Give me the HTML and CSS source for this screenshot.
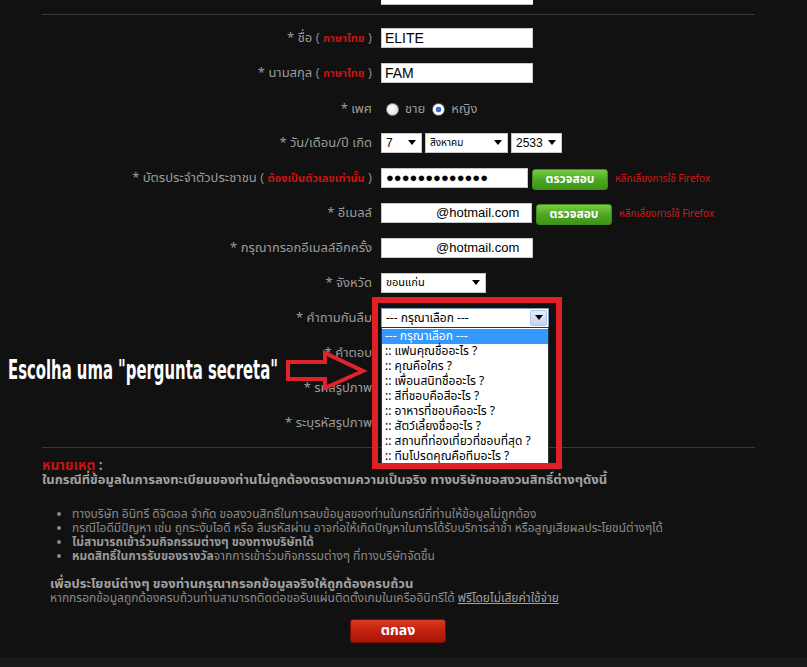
FILE: index.html
```html
<!DOCTYPE html>
<html lang="th">
<head>
<meta charset="utf-8">
<title>สมัครสมาชิก</title>
<link rel="stylesheet" href="styles.css">
</head>
<body>
<div class="page">
  <div class="top-stub"></div>
  <div class="rule rule-top"></div>

  <div class="form">
    <div class="row">
      <div class="label">* ชื่อ <span class="paren">(</span> <span class="hint">ภาษาไทย</span> <span class="paren">)</span></div>
      <div class="field"><div class="input">ELITE</div></div>
    </div>
    <div class="row">
      <div class="label">* นามสกุล <span class="paren">(</span> <span class="hint">ภาษาไทย</span> <span class="paren">)</span></div>
      <div class="field"><div class="input">FAM</div></div>
    </div>
    <div class="row row-gender">
      <div class="label">* เพศ</div>
      <div class="field radios">
        <span class="radio"></span><span class="radio-text">ชาย</span>
        <span class="radio checked"></span><span class="radio-text">หญิง</span>
      </div>
    </div>
    <div class="row">
      <div class="label">* วัน/เดือน/ปี เกิด</div>
      <div class="field dates">
        <div class="select sel-day"><span class="val">7</span><span class="tri"></span></div>
        <div class="select sel-month"><span class="val small">สิงหาคม</span><span class="tri"></span></div>
        <div class="select sel-year"><span class="val">2533</span><span class="tri"></span></div>
      </div>
    </div>
    <div class="row">
      <div class="label">* บัตรประจำตัวประชาชน <span class="paren">(</span> <span class="hint">ต้องเป็นตัวเลขเท่านั้น</span> <span class="paren">)</span></div>
      <div class="field">
        <div class="input input-id">●●●●●●●●●●●●●</div>
        <div class="btn-check">ตรวจสอบ</div>
        <div class="warn">หลีกเลี่ยงการใช้ Firefox</div>
      </div>
    </div>
    <div class="row">
      <div class="label">* อีเมลล์</div>
      <div class="field">
        <div class="input input-mail">@hotmail.com</div>
        <div class="btn-check">ตรวจสอบ</div>
        <div class="warn">หลีกเลี่ยงการใช้ Firefox</div>
      </div>
    </div>
    <div class="row">
      <div class="label">* กรุณากรอกอีเมลล์อีกครั้ง</div>
      <div class="field"><div class="input input-mail2">@hotmail.com</div></div>
    </div>
    <div class="row">
      <div class="label">* จังหวัด</div>
      <div class="field"><div class="select sel-prov"><span class="val small">ขอนแก่น</span><span class="tri"></span></div></div>
    </div>
    <div class="row">
      <div class="label">* คำถามกันลืม</div>
      <div class="field">
        <div class="qwrap">
          <div class="select sel-q"><span class="val">--- กรุณาเลือก ---</span><span class="qbtn"><span class="tri"></span></span></div>
          <ul class="dropdown">
            <li class="active">--- กรุณาเลือก ---</li>
            <li>:: แฟนคุณชื่ออะไร ?</li>
            <li>:: คุณคือใคร ?</li>
            <li>:: เพื่อนสนิทชื่ออะไร ?</li>
            <li>:: สีที่ชอบคือสีอะไร ?</li>
            <li>:: อาหารที่ชอบคืออะไร ?</li>
            <li>:: สัตว์เลี้ยงชื่ออะไร ?</li>
            <li>:: สถานที่ท่องเที่ยวที่ชอบที่สุด ?</li>
            <li>:: ทีมโปรดคุณคือทีมอะไร ?</li>
          </ul>
          <div class="redbox"></div>
        </div>
      </div>
    </div>
    <div class="row">
      <div class="label">* คำตอบ</div>
      <div class="field"></div>
    </div>
    <div class="row">
      <div class="label">* รหัสรูปภาพ</div>
      <div class="field"></div>
    </div>
    <div class="row">
      <div class="label">* ระบุรหัสรูปภาพ</div>
      <div class="field"></div>
    </div>
  </div>

  <div class="rule rule-bottom"></div>

  <div class="notes">
    <div class="note-title">หมายเหตุ <span class="colon">:</span></div>
    <div class="note-lead">ในกรณีที่ข้อมูลในการลงทะเบียนของท่านไม่ถูกต้องตรงตามความเป็นจริง ทางบริษัทขอสงวนสิทธิ์ต่างๆดังนี้</div>
    <ul class="bullets">
      <li>ทางบริษัท อินิทรี ดิจิตอล จำกัด ขอสงวนสิทธิ์ในการลบข้อมูลของท่านในกรณีที่ท่านให้ข้อมูลไม่ถูกต้อง</li>
      <li>กรณีไอดีมีปัญหา เช่น ถูกระงับไอดี หรือ ลืมรหัสผ่าน อาจก่อให้เกิดปัญหาในการได้รับบริการล่าช้า หรือสูญเสียผลประโยชน์ต่างๆได้</li>
      <li><b>ไม่สามารถเข้าร่วมกิจกรรมต่างๆ ของทางบริษัทได้</b></li>
      <li><b>หมดสิทธิ์ในการรับของรางวัล</b>จากการเข้าร่วมกิจกรรมต่างๆ ที่ทางบริษัทจัดขึ้น</li>
    </ul>
    <div class="benefit">
      <div class="benefit-title">เพื่อประโยชน์ต่างๆ ของท่านกรุณากรอกข้อมูลจริงให้ถูกต้องครบถ้วน</div>
      <div class="benefit-text">หากกรอกข้อมูลถูกต้องครบถ้วนท่านสามารถติดต่อขอรับแผ่นติดตั้งเกมในเครืออินิทรีได้ <a href="#" class="free">ฟรีโดยไม่เสียค่าใช้จ่าย</a></div>
    </div>
  </div>

  <div class="submit-row"><div class="btn-ok">ตกลง</div></div>

  <div class="annotation">Escolha uma "pergunta secreta"</div>
  <svg class="arrow" width="84" height="42" viewBox="0 0 84 42">
    <polygon points="3,12 40,12 40,3 78,21 40,38 40,29 3,29" fill="#111" stroke="#e0232b" stroke-width="4" stroke-linejoin="miter"/>
  </svg>
</div>
<div class="footer"></div>
</body>
</html>
```

FILE: styles.css
```css
html, body {
  margin: 0;
  padding: 0;
  background: #111;
}
body {
  font-family: Tahoma, "Noto Sans Thai", "Noto Sans Thai UI", "Noto Sans", "DejaVu Sans", sans-serif;
  color: #9a9a9a;
  font-size: 13px;
}
.page {
  position: relative;
  width: 807px;
  height: 657px;
  background: #111;
  overflow: hidden;
}
.footer {
  height: 10px;
  background: #1a1a1a;
}
.top-stub {
  margin-left: 381px;
  width: 152px;
  height: 5px;
  background: #fff;
  box-shadow: inset 0 -1px 0 #bbb;
}
.rule {
  margin-left: 42px;
  width: 713px;
  height: 1px;
  background: #383838;
}
.rule-top { margin-top: 9px; }
.rule-bottom { margin-top: 7px; }

.form { padding-top: 5px; }
.row {
  display: grid;
  grid-template-columns: 372px 1fr;
  column-gap: 9px;
  height: 35px;
  align-items: center;
}
.row-gender { padding-top: 3px; height: 32px; }
.label {
  text-align: right;
  white-space: nowrap;
  color: #9c9c9c;
  font-size: 13px;
}
.paren { color: #8a8a8a; }
.hint {
  color: #c81414;
  font-size: 11px;
  font-weight: bold;
}
.field {
  display: flex;
  align-items: center;
  gap: 4px;
  height: 22px;
}
.input {
  box-sizing: border-box;
  width: 152px;
  height: 20px;
  background: #fff;
  border: 1px solid #c8c8c8;
  padding-left: 3px;
  font-family: "Liberation Sans", Arial, sans-serif;
  font-size: 14px;
  line-height: 18px;
  color: #000;
}
.input-id {
  width: 147px;
  font-size: 13px;
  letter-spacing: 0;
  padding-left: 4px;
}
.input-mail, .input-mail2 {
  padding-left: 54px;
  font-size: 13px;
}
.input-mail { width: 151px; }
.btn-check {
  box-sizing: border-box;
  width: 76px;
  height: 21px;
  margin-top: 3px;
  border-radius: 3px;
  background: linear-gradient(#79cc45, #4ea821 50%, #3e951a);
  border: 1px solid #3c8c18;
  color: #fff;
  font-weight: bold;
  font-size: 12px;
  line-height: 19px;
  text-align: center;
}
.warn {
  margin-left: 3px;
  margin-top: 3px;
  color: #d41818;
  font-size: 10px;
  white-space: nowrap;
}
.radios { gap: 0; }
.radio {
  box-sizing: border-box;
  width: 13px;
  height: 13px;
  border-radius: 50%;
  border: 1px solid #8d8d8d;
  background: radial-gradient(circle at 40% 40%, #fff, #d6d6d6);
  margin-left: 5px;
  position: relative;
}
.radio.checked {
  margin-left: 7px;
  background: radial-gradient(circle, #3d6dc9 0 2.5px, #ffffff 3.2px);
  border-color: #6d6d6d;
}
.radio-text {
  margin-left: 6px;
  color: #9a9a9a;
  font-size: 13px;
}
.dates { gap: 3px; }
.select {
  box-sizing: border-box;
  height: 20px;
  background: #fff;
  border: 1px solid #c8c8c8;
  display: flex;
  align-items: center;
  justify-content: space-between;
  padding: 0 5px 0 4px;
  color: #000;
  font-family: "Liberation Sans", Arial, sans-serif;
  font-size: 12px;
}
.select .val.small {
  font-family: Tahoma, "Noto Sans Thai", "Noto Sans", sans-serif;
  font-size: 10px;
}
.tri {
  width: 0;
  height: 0;
  border-left: 4px solid transparent;
  border-right: 4px solid transparent;
  border-top: 5px solid #000;
}
.sel-day { width: 41px; }
.sel-month { width: 83px; }
.sel-year { width: 51px; }
.sel-prov { width: 105px; }
.sel-prov .val.small { font-size: 11px; }

.qwrap { position: relative; }
.sel-q {
  width: 168px;
  height: 20px;
  padding-right: 1px;
  border-color: #7f9db9;
  font-family: Tahoma, "Noto Sans Thai", "Noto Sans", sans-serif;
  font-size: 12px;
}
.qbtn {
  box-sizing: border-box;
  width: 17px;
  height: 16px;
  border: 1px solid #b3c4e0;
  border-radius: 2px;
  background: linear-gradient(#e6eefc, #c3d3f0);
  display: flex;
  align-items: center;
  justify-content: center;
}
.dropdown {
  position: absolute;
  left: 0;
  top: 19px;
  width: 168px;
  box-sizing: border-box;
  margin: 0;
  padding: 1px 0;
  list-style: none;
  background: #fff;
  border: 1px solid #333;
  z-index: 3;
}
.dropdown li {
  height: 15px;
  line-height: 15px;
  padding-left: 3px;
  color: #000;
  font-size: 12px;
  white-space: nowrap;
}
.dropdown li.active {
  background: #3399ff;
  color: #fff;
}
.redbox {
  position: absolute;
  left: -9px;
  top: -11px;
  width: 190px;
  height: 172px;
  box-sizing: border-box;
  border: 6px solid #dd2127;
  z-index: 4;
}

.notes {
  margin-top: 12px;
  padding-left: 42px;
}
.note-title {
  color: #cc1111;
  font-weight: bold;
  font-size: 13.5px;
  line-height: 13px;
}
.note-title .colon { color: #9a9a9a; }
.note-lead {
  color: #a2a2a2;
  font-weight: bold;
  font-size: 13px;
  line-height: 14px;
}
.bullets {
  margin: 20px 0 0 0;
  padding-left: 30px;
  color: #8a8a8a;
  font-size: 12px;
  line-height: 14px;
}
.bullets b { color: #9a9a9a; }
.benefit {
  margin-top: 14px;
  padding-left: 8px;
  line-height: 14px;
}
.benefit-title {
  color: #a2a2a2;
  font-weight: bold;
  font-size: 13px;
}
.benefit-text {
  color: #8a8a8a;
  font-size: 12px;
}
.free {
  color: #a2a2a2;
  text-decoration: underline;
}
.submit-row {
  margin-top: 14px;
  padding-left: 350px;
}
.btn-ok {
  box-sizing: border-box;
  width: 96px;
  height: 24px;
  border-radius: 3px;
  border: 1px solid #7a0e05;
  background: linear-gradient(#d93a22, #c1200f 50%, #a81608);
  color: #fff;
  font-weight: bold;
  font-size: 14px;
  line-height: 22px;
  text-align: center;
}

.annotation {
  position: absolute;
  left: 8px;
  top: 354px;
  color: #fff;
  font-family: "DejaVu Sans Condensed", "DejaVu Sans", sans-serif;
  font-weight: bold;
  font-size: 26px;
  line-height: 32px;
  white-space: nowrap;
  transform: scaleX(0.635);
  transform-origin: left top;
  z-index: 5;
}
.arrow {
  position: absolute;
  left: 285px;
  top: 350px;
  z-index: 5;
}
```
